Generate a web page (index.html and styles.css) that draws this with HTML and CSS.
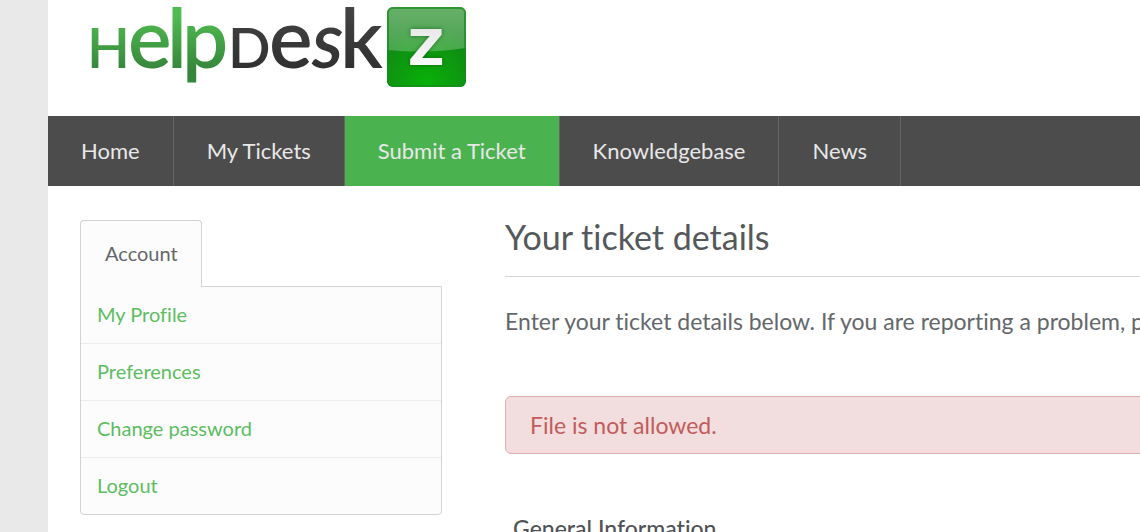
FILE: index.html
```html
<!DOCTYPE html>
<html lang="en">
<head>
<meta charset="utf-8">
<title>HelpDeskZ</title>
<link rel="stylesheet" href="styles.css">
</head>
<body>
<div class="page">
  <header class="header">
    <a class="logo" href="#">
      <svg width="390" height="100" viewBox="0 0 390 100" role="img" aria-label="HelpDeskZ">
        <defs>
          <linearGradient id="word" gradientUnits="userSpaceOnUse" x1="0" y1="6" x2="0" y2="70"><stop offset="0.15" stop-color="#50bb50"/><stop offset="1" stop-color="#36863b"/></linearGradient>
          <linearGradient id="dark" gradientUnits="userSpaceOnUse" x1="0" y1="6" x2="0" y2="70"><stop offset="0" stop-color="#444"/><stop offset="1" stop-color="#303030"/></linearGradient>
          <radialGradient id="tile" cx="0.5" cy="0.95" r="0.75"><stop offset="0" stop-color="#08b108"/><stop offset="1" stop-color="#128417"/></radialGradient>
          <linearGradient id="gloss" x1="0" y1="0" x2="0" y2="1"><stop offset="0" stop-color="#fff" stop-opacity="0.36"/><stop offset="1" stop-color="#fff" stop-opacity="0.23"/></linearGradient>
          <linearGradient id="zed" x1="0" y1="0" x2="0" y2="1"><stop offset="0" stop-color="#e4e4e4"/><stop offset="1" stop-color="#fff"/></linearGradient>
          <filter id="shade" x="-30%" y="-30%" width="160%" height="160%"><feDropShadow dx="0" dy="0" stdDeviation="2" flood-color="#043b04" flood-opacity="0.6"/></filter>
        </defs>
        <g class="logo-word" fill="url(#word)">
          <text class="logo-cap" x="7" y="68">H</text>
          <text class="logo-low" x="48 87 102" y="68">elp</text>
        </g>
        <g class="logo-word" fill="url(#dark)">
          <text class="logo-cap" x="148" y="68">D</text>
          <text class="logo-low" x="189" y="68">e</text>
          <text class="logo-slant" x="232" y="68">s</text>
          <text class="logo-low" x="260" y="68">k</text>
        </g>
        <rect x="307" y="7" width="79" height="80" rx="6" fill="url(#tile)"/>
        <path d="M307 13q0-6 6-6h67q6 0 6 6v35q-39 6-79 2z" fill="url(#gloss)"/>
        <rect x="308" y="8" width="77" height="78" rx="5" fill="none" stroke="#168b1b" stroke-opacity="0.7" stroke-width="2"/>
        <text class="logo-z" x="328" y="65" fill="url(#zed)" filter="url(#shade)">Z</text>
      </svg>
    </a>
  </header>
  <nav class="nav">
    <a class="nav-link" href="#">Home</a>
    <a class="nav-link" href="#">My Tickets</a>
    <a class="nav-link active" href="#">Submit a Ticket</a>
    <a class="nav-link" href="#">Knowledgebase</a>
    <a class="nav-link" href="#">News</a>
  </nav>
  <div class="columns">
    <aside class="account">
      <h2 class="account-tab">Account</h2>
      <ul class="account-list">
        <li><a href="#">My Profile</a></li>
        <li><a href="#">Preferences</a></li>
        <li><a href="#">Change password</a></li>
        <li><a href="#">Logout</a></li>
      </ul>
    </aside>
    <main class="main">
      <h1 class="title">Your ticket details</h1>
      <p class="intro">Enter your ticket details below. If you are reporting a problem, p</p>
      <div class="alert" role="alert">File is not allowed.</div>
      <h3 class="section">General Information</h3>
    </main>
  </div>
</div>
</body>
</html>
```
FILE: styles.css
```css
* { box-sizing: border-box; }
body {
  margin: 0;
  height: 100vh;
  overflow: hidden;
  padding-left: 48px;
  background: #e9e9e9;
  color: #64676a;
  font: 23px/32px Lato, "Open Sans", sans-serif;
  font-variant-ligatures: none;
}
h1, h2, h3, p, ul { margin: 0; padding: 0; font-weight: 400; }
a { text-decoration: none; }
.page { min-height: 100vh; background: #fff; }
.header { padding: 0 32px 16px; }
.logo, .logo svg { display: block; }
.logo svg { overflow: visible; }
.logo-word { font-family: Lato, sans-serif; font-weight: 600; }
.logo-cap { font-size: 56px; }
.logo-low { font-size: 82px; }
.logo-slant { font-size: 78px; font-style: italic; }
.logo-z { font: 700 50px "DejaVu Sans", sans-serif; }
.nav { display: flex; background: #4c4c4c; font-size: 22px; }
.nav-link {
  padding: 19px 33px 19px;
  border-right: 1px solid #656565;
  color: #e8e8e8;
  white-space: nowrap;
}
.nav-link.active { background: #4bb250; }
.columns {
  display: grid;
  grid-template-columns: 362px minmax(0, 1fr);
  gap: 63px;
  padding: 32px 0 0 32px;
}
.account { padding-top: 2px; font-size: 20px; line-height: 24px; }
.account-tab {
  position: relative;
  width: fit-content;
  margin-bottom: -1px;
  padding: 20px 23px 22px 24px;
  border: 1px solid #cfd4d6;
  border-bottom: 0;
  border-radius: 4px 4px 0 0;
  background: #fcfcfc;
  font-size: 20px;
}
.account-list {
  border: 1px solid #cfd4d6;
  border-radius: 0 0 4px 4px;
  background: #fcfcfc;
  list-style: none;
}
.account-list li + li { border-top: 1px solid #ececec; }
.account-list a { display: block; padding: 15px 16px 17px; color: #5cbd61; }
.main { overflow: hidden; }
.title {
  padding-bottom: 20px;
  border-bottom: 1px solid #d4d8dc;
  color: #55585b;
  font-size: 34px;
  line-height: 38px;
}
.intro { padding: 28px 0 59px; white-space: nowrap; }
.alert {
  margin-right: -8px;
  padding: 12px 24px;
  border: 1px solid #e0aeb0;
  border-radius: 6px;
  background: #f2dede;
  color: #c25b5c;
}
.section { padding: 58px 8px 0; color: #505356; font-size: 23px; font-weight: 500; }
```
